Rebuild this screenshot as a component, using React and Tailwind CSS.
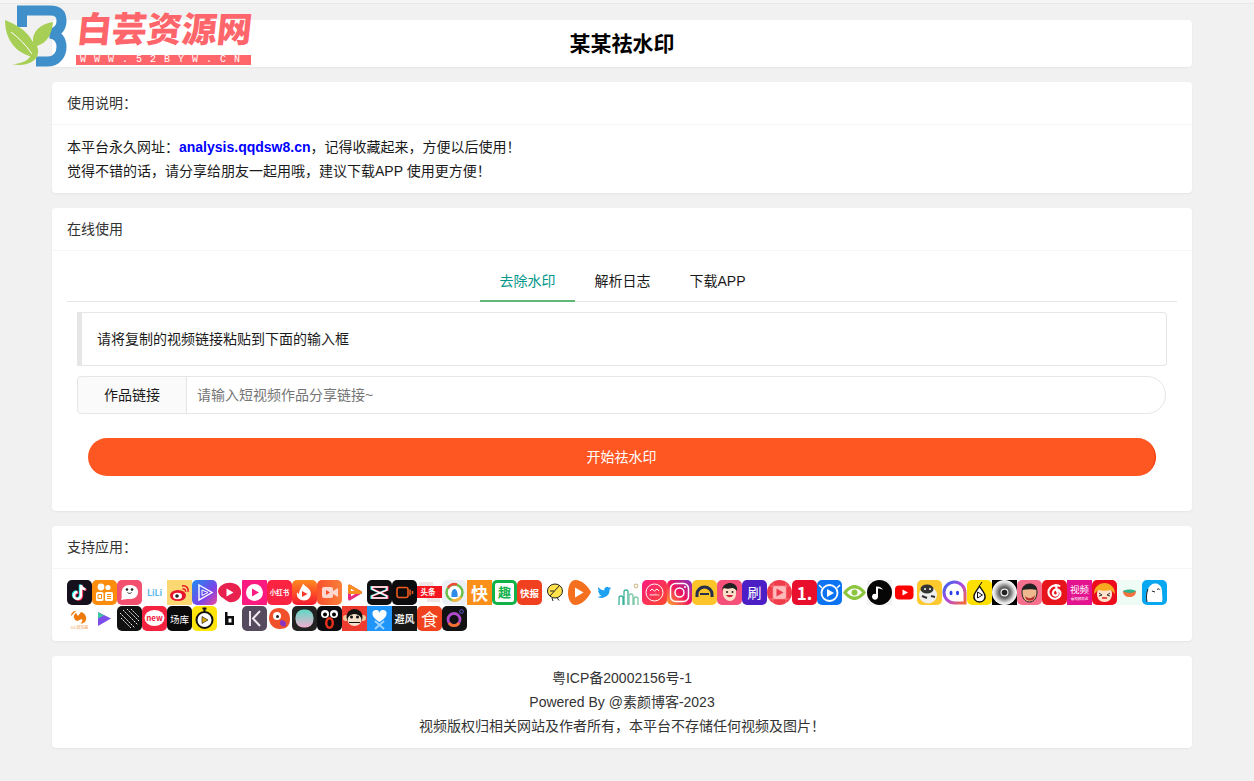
import { useState } from 'react';

const R = ({ fill, rx = 5 }) => <rect width="25" height="25" rx={rx} fill={fill} />;
const T = ({ x = 12.5, y = 17, size = 10, fill = '#fff', weight = 700, children }) => (
  <text x={x} y={y} fontSize={size} fill={fill} fontWeight={weight} textAnchor="middle" fontFamily="'Noto Sans CJK SC',sans-serif">
    {children}
  </text>
);

const Note = ({ c = '#fff', dx = 0, dy = 0 }) => (
  <path d="M14 5v10.5a3.5 3.5 0 1 1-3.5-3.5M14 5c.4 2.6 2 4 4.5 4.3" fill="none" stroke={c} strokeWidth="2.4" transform={`translate(${dx} ${dy})`} />
);

// first row of the supported apps
const rowOne = [
  <><R fill="#15101c" /><Note c="#25f4ee" dx="-1" dy="-.6" /><Note c="#fe2c55" dx="1" dy=".6" /><Note /></>,
  <><R fill="#fb8c0c" /><circle cx="9" cy="7" r="3.4" fill="#fff" /><circle cx="16" cy="7.5" r="2.6" fill="#fff" /><rect x="4" y="12" width="7.5" height="9" rx="1.5" fill="#fff" /><rect x="13" y="12" width="8" height="9" rx="1.5" fill="#fff" /><path d="M6 14.5h3.5v4H6zM15 14.5h4M15 16.5h4M15 18.5h4" fill="none" stroke="#fb8c0c" /></>,
  <><R fill="#f2506e" /><path d="M4 20c1-2 .6-4 .6-7 0-5 3-8 8-8s8.400 2.500 8.400 7-3.500 7-8 7c-3 0-5.500 0-9 1z" fill="#fff" /><circle cx="10" cy="9.500" r="1.300" fill="#222" /><circle cx="15" cy="9.500" r="1.300" fill="#222" /><path d="M10.500 12.500c1 1.200 3 1.200 4 0" stroke="#222" fill="none" /></>,
  <T size="8.500" y="15.500" fill="#5cb8ea">LiLi</T>,
  <><rect width="25" height="25" fill="#fcd873" /><ellipse cx="11" cy="15.500" rx="8" ry="5.500" fill="#e6162d" /><ellipse cx="10.500" cy="16" rx="4.500" ry="3.200" fill="#fff" /><circle cx="10" cy="16" r="1.800" fill="#222" /><path d="M15 6c4-1 7 2 6 6M15.500 9c2-.5 3.500 1 3 3" fill="none" stroke="#e6162d" strokeWidth="1.500" /></>,
  <><defs><linearGradient id="g6" x1="0" y1="0" x2="1" y2="1"><stop offset="0" stopColor="#1f8cf0" /><stop offset=".6" stopColor="#7a45e8" /><stop offset="1" stopColor="#f04a9a" /></linearGradient></defs><R fill="url(#g6)" /><path d="M7 5l13 7.500L7 20z" fill="none" stroke="#fff" strokeWidth="1.400" /><path d="M10 10l6 2.500-6 3z" fill="none" stroke="#fff" /></>,
  <><path d="M1 11C2 5 9 2 15 3c6 1 10 5 9 11-1 6-7 9-12 8-3-1-4-3-6-4s-5-4-5-7z" fill="#e8214f" /><path d="M9.500 8.500l7 4-7 4z" fill="#fff" /></>,
  <><R fill="#fb1a7f" rx="1" /><circle cx="12.500" cy="12.500" r="8.500" fill="#fff" /><path d="M10 8.500l7 4-7 4z" fill="#fb1a7f" /></>,
  <><R fill="#fa2442" /><T size="6.500" y="15">小红书</T></>,
  <><defs><linearGradient id="g10" x1="0" y1="0" x2="0" y2="1"><stop offset="0" stopColor="#ff8a1f" /><stop offset="1" stopColor="#f6182f" /></linearGradient></defs><R fill="url(#g10)" /><path d="M11 3.500c1 2 5 3.500 7 7 2.500 5-1 10-6 10s-8-4-7-8.500c.5 1 1 1.500 2 2 0-4 3-6.500 4-10.500z" fill="#fff" /><path d="M10 11l5.500 3-5.500 3z" fill="#f6392a" /></>,
  <><defs><linearGradient id="g11" x1="0" y1="0" x2="1" y2="0"><stop offset="0" stopColor="#f9512c" /><stop offset="1" stopColor="#f9803a" /></linearGradient></defs><R fill="url(#g11)" /><rect x="5" y="7" width="11" height="11" rx="2" fill="#ffd9d0" /><path d="M16 11l5-3v9l-5-3z" fill="#ffd9d0" /><path d="M9 10l4 2.500-4 2.500z" fill="#f9512c" /></>,
  <><path d="M7.500 6v13l11-6.500z" fill="none" stroke="#ee2c7d" strokeWidth="3" strokeLinejoin="round" /><path d="M7.500 6v6.500h11z" fill="none" stroke="#f7901f" strokeWidth="3" strokeLinejoin="round" /></>,
  <><R fill="#0f0f12" /><g fill="none" strokeWidth="1.800"><path d="M5 7h15v3L5 16v2h15v-2L5 9z" stroke="#25f4ee" transform="translate(-.7 0)" /><path d="M5 7h15v3L5 16v2h15v-2L5 9z" stroke="#fe2c55" transform="translate(.7 0)" /><path d="M5 7h15v3L5 16v2h15v-2L5 9z" stroke="#fff" strokeWidth="1.300" /></g></>,
  <><R fill="#0c0c0e" /><rect x="5" y="7.500" width="11" height="10" rx="2" fill="none" stroke="#ee5a1e" strokeWidth="1.600" /><path d="M18 9.500v6M20.500 11v3" stroke="#ee5a1e" strokeWidth="1.500" /></>,
  <><rect y="6" width="25" height="12" fill="#f5151e" /><path d="M2 2h14v4H2zM10 18h13v4H10z" fill="#f0e5e5" /><T size="7.500" y="15" x="11">头条</T></>,
  <><R fill="#eceff3" /><circle cx="12.500" cy="12.500" r="8" fill="#fff" stroke="#6cbf4b" strokeWidth="2.500" /><path d="M6 8a8 8 0 0 1 9-3.500" fill="none" stroke="#f04b3a" strokeWidth="2.500" /><path d="M19 17a8 8 0 0 1-9 3" fill="none" stroke="#f6b73c" strokeWidth="2.500" /><path d="M9.500 17c-.5-5 1-8 3-8s3.500 3 3 8z" fill="#2d8ce8" /></>,
  <><rect width="25" height="25" fill="#fa8f1a" /><T size="17" y="19.800">快</T></>,
  <><R fill="#12b14a" /><rect x="3" y="3" width="19" height="19" rx="2" fill="#fff" /><T size="13" y="17" fill="#12b14a">趣</T></>,
  <><R fill="#f0401f" /><T size="9.500" y="16.500">快报</T></>,
  <><ellipse cx="13" cy="11" rx="7.500" ry="7" fill="#ffe14c" stroke="#222" /><path d="M8 16l9-10M10 18l1 3M15 17.500l2 3M8 11h4" stroke="#222" fill="none" /></>,
  <><path d="M8 0c8 0 14 7 17 12-3 6-10 13-17 13C3 25 0 19 0 13 0 6 3 0 8 0z" fill="#f4701f" transform="translate(1 0) scale(.92 1)" /><path d="M8 7.500l8.500 5L8 17.500z" fill="#fff" /></>,
  <path d="M22 6.500c-.7.400-1.500.600-2.300.700.800-.500 1.500-1.300 1.700-2.200-.800.500-1.600.800-2.500 1a3.900 3.900 0 0 0-6.700 3.600C9 9.400 6 7.800 4 5.300c-1 1.800-.500 4 1.200 5.200-.600 0-1.200-.200-1.700-.500 0 1.900 1.300 3.500 3.100 3.900-.600.100-1.200.200-1.800.100.500 1.600 2 2.700 3.700 2.700A7.900 7.900 0 0 1 2.600 18.300 11 11 0 0 0 19.500 8.600c.900-.500 1.800-1.200 2.500-2.100z" fill="#1da1f2" transform="translate(3.500 3.500) scale(.72)" />,
  <g fill="none" strokeWidth="1.300"><path d="M2 25v-7a2 2 0 0 1 4 0v7M7 25V12a2 2 0 0 1 4 0v13" stroke="#3bb39a" /><path d="M12 25V16a2 2 0 0 1 4 0v9M17 25v-6a2 2 0 0 1 4 0v6" stroke="#7cc8a8" /><circle cx="19" cy="6" r="1.800" stroke="#d8c49a" /></g>,
  <><defs><linearGradient id="g24" x1="0" y1="0" x2="1" y2="1"><stop offset="0" stopColor="#fb1a7f" /><stop offset="1" stopColor="#fb4a2f" /></linearGradient></defs><R fill="url(#g24)" /><circle cx="12.500" cy="12.500" r="8.500" fill="none" stroke="#fff" /><path d="M8 11l2-2 2.500 2L15 9l2 2" fill="none" stroke="#fff" /><T size="3.500" y="16" weight="400">meitu</T></>,
  <><defs><linearGradient id="g25" x1="0" y1="1" x2="1" y2="0"><stop offset="0" stopColor="#fdb02f" /><stop offset=".5" stopColor="#f0145f" /><stop offset="1" stopColor="#8034c0" /></linearGradient></defs><R fill="url(#g25)" /><rect x="3.500" y="3.500" width="18" height="18" rx="5" fill="none" stroke="#fff" strokeWidth="1.500" /><circle cx="12.500" cy="12.500" r="4.500" fill="none" stroke="#fff" strokeWidth="1.500" /><circle cx="18" cy="7" r="1" fill="#fff" /></>,
  <><R fill="#fdc52a" /><path d="M5 17v-3a7.500 7 0 0 1 15 0v3" fill="none" stroke="#27304a" strokeWidth="3" /><path d="M8 14h9" stroke="#27304a" strokeWidth="2" /></>,
  <><R fill="#f4507a" /><path d="M6 11c0-5 4-7 7-7s6 2 6 7v3c0 4-3 7-6 7s-7-3-7-7z" fill="#fde0c8" /><path d="M5 11c0-6 5-8 8-8s8 2 7 8c-2-2-3-3-5-3-3 1-6 1-8 0-1 1-2 2-2 3z" fill="#222" /><circle cx="10" cy="12" r="1" fill="#222" /><circle cx="15.500" cy="12" r="1" fill="#222" /><path d="M9 15c2 3 6 3 7 0z" fill="#d02040" /></>,
  <><R fill="#4c1fc6" /><T size="14" y="18" weight="400">刷</T></>,
  <><circle cx="12.500" cy="12.500" r="12.500" fill="#ef3b4a" /><rect x="6" y="6" width="13" height="13" rx="2" fill="#fbb" /><path d="M2 6h21M6 2v21M19 2v21M2 19h21" stroke="#f99" strokeWidth=".6" /><path d="M9.500 8.500l7 4-7 4z" fill="#ef3b4a" /></>,
  <><R fill="#e80f2c" /><T size="17" y="19.800">1.</T></>,
  <><R fill="#0c74f2" /><circle cx="12.500" cy="13" r="8" fill="none" stroke="#fff" strokeWidth="1.800" /><path d="M10 9l7 4-7 4z" fill="#fff" /><path d="M2 5l3 3M23 5l-3 3" stroke="#fff" strokeWidth="1.500" /></>,
  <><path d="M1 12.500C5 7 9 5 12.500 5S20 7 24 12.500C20 18 16 20 12.500 20S5 18 1 12.500z" fill="#8cc63f" /><path d="M5 12.500C8 9 10 8.500 12.500 8.500s5 .5 7.500 4c-3 3.500-5 4-7.500 4s-4.500-.5-7.500-4z" fill="#fff" /><circle cx="12.500" cy="12.500" r="3" fill="#8cc63f" /></>,
  <><rect width="25" height="25" fill="#f3f3f3" /><circle cx="12.500" cy="12.500" r="12.500" fill="#060606" /><path d="M11 6.500v10.200a3 3 0 1 1-2-2.800V6.500c3-.5 6 1 7 3.500-1.500-1-3-1.500-5-1.500z" fill="#fff" /></>,
  <><rect y="5.500" width="18.500" height="14" x="0" rx="4" fill="#f00" transform="translate(3 0)" /><path d="M10.500 9.500l5.500 3-5.500 3z" fill="#fff" /></>,
  <><R fill="#fcc92f" /><ellipse cx="11" cy="15" rx="9" ry="8.500" fill="#eee" /><ellipse cx="10" cy="9" rx="6.500" ry="4.500" fill="#333" /><circle cx="8" cy="9" r="1" fill="#fff" /><circle cx="13" cy="9" r="1" fill="#fff" /><path d="M5 16l5 2M14 16l4 1" stroke="#333" strokeWidth="2" /></>,
  <><defs><linearGradient id="g36" x1="0" y1="0" x2="1" y2="1"><stop offset="0" stopColor="#2b6af0" /><stop offset=".5" stopColor="#b04ae0" /><stop offset="1" stopColor="#f26a3a" /></linearGradient></defs><path d="M23 23H12.500A10.500 10.500 0 1 1 23 12.500z" fill="none" stroke="url(#g36)" strokeWidth="3" /><ellipse cx="9" cy="13" rx="1.500" ry="2.200" fill="#2b3fe8" /><ellipse cx="15.500" cy="13" rx="1.500" ry="2.200" fill="#2b3fe8" /></>,
  <><R fill="#fde000" /><path d="M12.500 6c1.500 3 3 4 5 8 2 5-1.500 8-5 8s-7-3-5-8c2-4 3.500-5 5-8z" fill="#fff" stroke="#111" strokeWidth="1.400" /><path d="M13 5l2-3" stroke="#111" /><path d="M10.500 12l5 3-5 3z" fill="none" stroke="#111" /></>,
  <><defs><radialGradient id="g38"><stop offset="0" stopColor="#222" /><stop offset=".45" stopColor="#666" /><stop offset=".8" stopColor="#ddd" /><stop offset="1" stopColor="#fff" /></radialGradient></defs><rect width="25" height="25" fill="#000" /><circle cx="12.500" cy="12.500" r="12.500" fill="url(#g38)" /><circle cx="12.500" cy="12.500" r="4" fill="#eee" /><circle cx="12.500" cy="12.500" r="2.800" fill="#222" /></>,
  <><R fill="#f6708e" /><path d="M5 12c0-6 4-8 8-8s7 3 7 8c0 6-3 10-7.500 10S5 18 5 12z" fill="#eeb98f" stroke="#222" /><path d="M5 10c1-4 4-6 8-6s7 2 7 6c-4-1-10-1-15 0z" fill="#222" /><path d="M8 16c3 3 7 3 10-1l-1 4c-2 2-6 2-8 0z" fill="#b83030" /></>,
  <><R fill="#e8141c" /><path d="M14 5c-5 .5-8 4-7.500 8s4.500 6.500 8 5.500 5-4.500 3.500-7-5-3-6.500-.5 0 5 2.500 4.500 2-3 1-4.500L14 5c2 0 3 .5 4 1.500" fill="none" stroke="#fff" strokeWidth="2.200" /></>,
  <><rect width="25" height="25" fill="#e3128e" /><T size="9.500" y="13" weight="400">视频</T><T size="3.500" y="20" weight="400">看视频就这</T></>,
  <><R fill="#ec0c1c" /><path d="M5 14c0-5 3-8 7.500-8S20 9 20 14s-3 8-7.500 8S5 19 5 14z" fill="#ffe3cc" /><path d="M2 14c0-7 5-11 10.500-11S23 7 23 14l-4-4c-4 1-9 1-13 0z" fill="#f7a91f" /><path d="M7 13l3 2-3 1M18 13l-3 2 3 1" stroke="#333" fill="none" /><path d="M10 18h5" stroke="#d22" strokeWidth="1.500" /></>,
  <><rect width="25" height="25" fill="#effcf5" /><path d="M6 11h13c0 4-3 6-6.500 6S6 15 6 11z" fill="#f4703c" /><path d="M6 11c3-2 10-2 13 0-3 2.500-10 2.500-13 0z" fill="#2fb28a" /></>,
  <><R fill="#08a7f2" /><path d="M5 22c-1-5-.5-9 1-13 1.500-4 5-6 8-5.500 4 .5 6 4 6 8 0 4 1 7 0 10.500z" fill="#fff" /><path d="M10 11l3 1M15 9.500c1-.8 2.500-.8 3 .2" stroke="#222" fill="none" /><path d="M5 22c-1-5-.5-9 1-13" stroke="#222" fill="none" /></>,
];

// second row
const rowTwo = [
  <><path d="M10 15c-4-2-4-6-1-8l2 3 3-4c4 1 6 5 5 8-1 3-4 4-6 3 2 0 3-2 2-4" fill="#ee7a0c" /><path d="M9 5c-3 0-5 2-5 5 2-2 3-3 5-5z" fill="#ee7a0c" /><T size="4" y="23" fill="#ee9a4c" weight="400">UC浏览器</T></>,
  <><path d="M6 6l13 6.500L6 20z" fill="#7c4de8" /><path d="M6 6l6 3.500-6 3z" fill="#3cc8a0" /></>,
  <><R fill="#111" /><path d="M6 4l15 15M3 7l15 15M10 3l12 12M4 12l10 10M14 3l8 8" stroke="#eee" strokeWidth="1" strokeDasharray="2 1" /></>,
  <><R fill="#f4213f" /><ellipse cx="12.500" cy="12" rx="10" ry="8" fill="#fff" /><T size="8" y="15" fill="#f4213f">new</T></>,
  <><R fill="#0a0a0a" /><T size="9.500" y="16.500" weight="400">场库</T></>,
  <><R fill="#ffe40a" /><circle cx="12.500" cy="14" r="8" fill="#fff" stroke="#111" strokeWidth="2" /><path d="M10.500 2.500h4M12.500 3v3" stroke="#111" strokeWidth="2" /><path d="M10 10.500l6 3.500-6 3.500z" fill="#d8a800" stroke="#111" strokeWidth=".6" /></>,
  <path d="M8 6h2.500v4H17v9H8zM11.500 12.500h3v4h-3z" fill="#0e0e0e" fillRule="evenodd" />,
  <><R fill="#554a5e" /><path d="M8 5v15M18 5l-7 7.500 7 7.500" fill="none" stroke="#efe9ef" strokeWidth="2" /></>,
  <><path d="M12 2c6 0 11 4 11 11s-4 10-10 10C6 23 2 18 2 12S6 2 12 2z" fill="#f0502a" /><circle cx="10" cy="10" r="4" fill="#fff" /><circle cx="10.500" cy="10.500" r="1.500" fill="#222" /><path d="M14 14c2 0 5 1 5 4s-2 3-4 2-3-3-1-6z" fill="#8a35c0" /></>,
  <><R fill="#222" /><defs><linearGradient id="g210" x1="0" y1="0" x2="0" y2="1"><stop offset="0" stopColor="#5fd8c4" /><stop offset="1" stopColor="#f0b0d0" /></linearGradient></defs><rect x="3.500" y="3.500" width="18" height="18" rx="8" fill="url(#g210)" /></>,
  <><R fill="#0c0c10" /><circle cx="8" cy="8" r="4" fill="#fff" /><circle cx="17" cy="8" r="4" fill="#fff" /><circle cx="8" cy="8.500" r="2" fill="#000" /><circle cx="17" cy="8.500" r="2" fill="#000" /><ellipse cx="12.500" cy="17" rx="4.500" ry="6" fill="#e8301c" /><ellipse cx="12.500" cy="17" rx="2" ry="3.500" fill="#0c0c10" /></>,
  <><rect width="25" height="25" fill="#ee3b30" /><circle cx="4" cy="12" r="3" fill="#f0c8a0" /><circle cx="21" cy="12" r="3" fill="#f0c8a0" /><circle cx="12.500" cy="11" r="8" fill="#111" /><ellipse cx="12.500" cy="14" rx="7" ry="6" fill="#f5e0cc" /><circle cx="9.500" cy="11" r="1.500" fill="#111" /><circle cx="15.500" cy="11" r="1.500" fill="#111" /><path d="M7 16.500h11" stroke="#111" /></>,
  <><rect width="25" height="25" fill="#1f95fa" /><path d="M12.500 16c-4-3-7-5-7-8a3.500 3.500 0 0 1 7-1 3.500 3.500 0 0 1 7 1c0 3-3 5-7 8z" fill="#fff" /><path d="M8 15l9 8M17 15l-9 8" stroke="#9fd2ff" strokeWidth="2" /></>,
  <><rect width="25" height="25" fill="#161616" /><T size="10" y="17" fill="#eee">避风</T></>,
  <><R fill="#f0421f" /><T size="17" y="19.500" fill="#fff3e8" weight="400">食</T></>,
  <><R fill="#121212" /><circle cx="12" cy="13.500" r="6" fill="none" stroke="#b04ac8" strokeWidth="2.800" /><path d="M7 17a6 6 0 0 0 10 0" fill="none" stroke="#f0702c" strokeWidth="2.800" /><circle cx="19.500" cy="5.500" r="1.800" fill="none" stroke="#6a5ce0" /></>,
];

const AppIcon = ({ children }) => (
  <svg viewBox="0 0 25 25" className="block w-[25px] h-[25px] shrink-0">
    {children}
  </svg>
);

const Card = ({ title, className = '', children }) => (
  <section className={`bg-white rounded-sm shadow-[0_1px_2px_0_rgba(0,0,0,0.05)] ${className}`}>
    {title && <div className="h-[43px] px-[15px] leading-[42px] text-[#333] border-b border-[#f6f6f6]">{title}</div>}
    {children}
  </section>
);

// logo sits on top of the title card
const Logo = () => (
  <div className="absolute left-0 top-0 w-[256px] h-[70px]">
    <svg viewBox="0 0 70 70" className="absolute left-0 top-0 w-[70px] h-[70px]">
      <path d="M22 27V10.500H50C59 10.500 61.500 15 61.500 21S58 32.500 50 33.500C58 34.500 61.500 40 61.500 47S57 61.500 48 61.500H36" fill="none" stroke="#3f8fca" strokeWidth="10" />
      <path d="M5 20C20 26 36 36 37 58 24 56 5 47 5 20Z" fill="#a8cf55" />
      <path d="M11 32C19 38 26 45 32 54" fill="none" stroke="#fff" strokeWidth="1" />
      <path d="M53 22C40 24 32 32 33 42 35 58 25 64 12 64 30 68 42 58 37 46 47 43 52 34 53 22Z" fill="#a8cf55" />
    </svg>
    <div className="absolute left-[77px] top-[5px] w-[175px] text-center text-[35px] leading-[50px] font-black -skew-x-6 text-[#ff666b] whitespace-nowrap">白芸资源网</div>
    <div className="absolute left-[76px] top-[55px] w-[175px] h-[10px] bg-[#ff666b] text-white text-[10px] leading-[10px] tracking-[8px] pl-[4px] whitespace-nowrap overflow-hidden font-['Liberation_Mono',monospace]">WWW.52BYW.CN</div>
  </div>
);

const tabs = ['去除水印', '解析日志', '下载APP'];

const App = () => {
  const [activeTab, setActiveTab] = useState(0);

  return (
    <div className="relative min-h-screen bg-[#f1f1f1] text-sm text-[#1a1a1a] [font-family:'Liberation_Sans','Noto_Sans_CJK_SC',sans-serif]">
      <div className="h-1 bg-[#f5f5f5] border-b border-[#e8e8e8]" />
      <Logo />
      <main className="ml-[52px] w-[1140px] pt-4 pb-[33px] flex flex-col gap-[15px]">
        <Card className="h-[47px] flex items-center justify-center">
          <h1 className="text-[21px] font-bold text-black">某某祛水印</h1>
        </Card>

        <Card title="使用说明：">
          <div className="px-[15px] py-2.5 leading-6">
            <p>
              本平台永久网址：<a href="#" className="font-bold text-[#0000ff]">analysis.qqdsw8.cn</a>，记得收藏起来，方便以后使用！
            </p>
            <p>觉得不错的话，请分享给朋友一起用哦，建议下载APP 使用更方便！</p>
          </div>
        </Card>

        <Card title="在线使用" className="h-[303px]">
          <div className="px-[15px] pt-2.5">
            <div className="flex justify-center pl-px h-[41px] border-b border-[#e6e6e6]">
              {tabs.map((tab, i) => (
                <button
                  key={tab}
                  onClick={() => setActiveTab(i)}
                  className={`h-[41px] px-[19.500px] leading-10 border-b-2 ${i === activeTab ? 'text-[#009688] border-[#5fb878]' : 'text-[#1a1a1a] border-transparent'}`}
                >
                  {tab}
                </button>
              ))}
            </div>
            <div className="px-2.5 pt-2.5">
              <div className="h-[54px] pl-[15px] flex items-center border border-l-[5px] border-[#e6e6e6] rounded-r-sm">
                请将复制的视频链接粘贴到下面的输入框
              </div>
              <div className="flex h-[38px] mt-2.5">
                <label className="w-[110px] shrink-0 flex items-center justify-center bg-[#fafafa] border border-[#e6e6e6] rounded-l-sm">作品链接</label>
                <input
                  placeholder="请输入短视频作品分享链接~"
                  className="flex-1 -ml-px mr-px pl-2.5 border border-[#e6e6e6] rounded-r-[19px] outline-none placeholder:text-[#757575]"
                />
              </div>
              <div className="px-[11px] pt-6">
                <button className="w-full h-[38px] rounded-[19px] bg-[#ff5722] border-r border-[#f03000] text-white">开始祛水印</button>
              </div>
            </div>
          </div>
        </Card>

        <Card title="支持应用：">
          <div className="px-[15px] pt-[11px] pb-2.5 flex flex-col gap-px">
            <div className="flex">
              {rowOne.map((icon, i) => <AppIcon key={i}>{icon}</AppIcon>)}
            </div>
            <div className="flex">
              {rowTwo.map((icon, i) => <AppIcon key={i}>{icon}</AppIcon>)}
            </div>
          </div>
        </Card>

        <Card className="py-2.5 text-center leading-6 text-[#333]">
          <p>粤ICP备20002156号-1</p>
          <p>Powered By @素颜博客-2023</p>
          <p>视频版权归相关网站及作者所有，本平台不存储任何视频及图片！</p>
        </Card>
      </main>
    </div>
  );
};

export default App;
